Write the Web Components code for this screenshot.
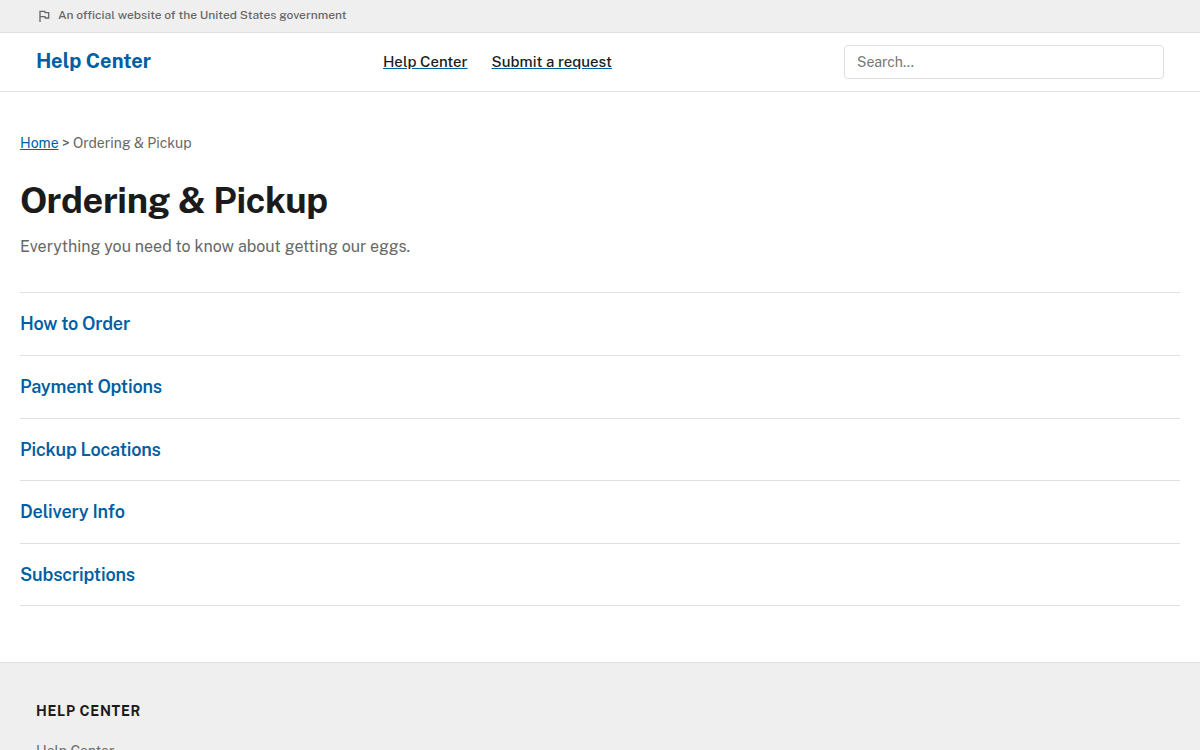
<!DOCTYPE html>
<html lang="en">
<head>
<meta charset="utf-8">
<title>Ordering &amp; Pickup</title>
<style>
    :root {
        --primary: #005ea2;
        --ink: #1b1b1b;
        --muted: #676767;
        --line: #dfdfdf;
        --surface: #efefef;
    }
    body {
        margin: 0;
        overflow: hidden;
        background: #fff;
        color: var(--ink);
        font-family: 'Public Sans', Roboto, 'Liberation Sans', sans-serif;
        font-size: 16px;
        -webkit-font-smoothing: antialiased;
    }
</style>
</head>
<body>
<help-page>
    <gov-banner slot="banner">An official website of the United States government</gov-banner>
    <help-header slot="header" brand="Help Center">
        <nav-link>Help Center</nav-link>
        <nav-link>Submit a request</nav-link>
    </help-header>
    <page-heading>
        <span slot="crumb">Ordering &amp; Pickup</span>
        <span slot="title">Ordering &amp; Pickup</span>
        <span slot="description">Everything you need to know about getting our eggs.</span>
    </page-heading>
    <article-list>
        <article-row>How to Order</article-row>
        <article-row>Payment Options</article-row>
        <article-row>Pickup Locations</article-row>
        <article-row>Delivery Info</article-row>
        <article-row>Subscriptions</article-row>
    </article-list>
    <help-footer slot="footer" heading="Help Center">Help Center</help-footer>
</help-page>

<script>
class HelpPage extends HTMLElement {
    constructor() {
        super();
        this.attachShadow({ mode: 'open' });
        this.shadowRoot.innerHTML = `
            <style>
                :host { display: flex; flex-direction: column; height: 100vh; overflow: hidden; }
                main { padding: 40px 20px 56px; flex: none; }
            </style>
            <slot name="banner"></slot>
            <slot name="header"></slot>
            <main><slot></slot></main>
            <slot name="footer"></slot>
        `;
    }
}

class GovBanner extends HTMLElement {
    constructor() {
        super();
        this.attachShadow({ mode: 'open' });
        this.shadowRoot.innerHTML = `
            <style>
                :host {
                    display: flex; align-items: center; gap: 6px; flex: none;
                    box-sizing: border-box; height: 33px; padding: 0 36px 2px;
                    background: var(--surface); border-bottom: 1px solid var(--line);
                    color: var(--muted); font-size: 12px; font-weight: 500; line-height: 18px;
                }
                svg { width: 16px; height: 16px; margin-top: 1px; }
            </style>
            <svg viewBox="0 0 24 24" fill="currentColor">
                <path d="M12.360 6l.4 2H18v6h-3.360l-.4-2H7V6h5.360M14 4H5v17h2v-7h5.600l.4 2h7V6h-5.600L14 4z"/>
            </svg>
            <span><slot></slot></span>
        `;
    }
}

class HelpHeader extends HTMLElement {
    constructor() {
        super();
        this.attachShadow({ mode: 'open' });
    }

    connectedCallback() {
        const brand = this.getAttribute('brand') || '';
        this.shadowRoot.innerHTML = `
            <style>
                :host {
                    display: grid; grid-template-columns: 347px 1fr 320px;
                    align-items: center; flex: none;
                    box-sizing: border-box; height: 59px; padding: 0 36px;
                    background: #fff; border-bottom: 1px solid var(--line);
                }
                .brand { color: var(--primary); font-size: 20px; font-weight: 700; line-height: 24px; padding-bottom: 2px; }
                nav { display: flex; gap: 24px; }
                input {
                    box-sizing: border-box; width: 100%; height: 34px; padding: 0 12px;
                    border: 1px solid var(--line); border-radius: 4px;
                    background: #fff; font: 14px 'Public Sans', Roboto, sans-serif;
                }
                input::placeholder { color: #757575; }
            </style>
            <div class="brand">${brand}</div>
            <nav><slot></slot></nav>
            <input type="search" placeholder="Search..." aria-label="Search">
        `;
    }
}

class NavLink extends HTMLElement {
    constructor() {
        super();
        this.attachShadow({ mode: 'open' });
        this.shadowRoot.innerHTML = `
            <style>
                :host { display: block; font-size: 15px; font-weight: 500; line-height: 20px; }
                a { text-decoration: underline; text-decoration-color: var(--primary); color: var(--ink); }
            </style>
            <a href="#"><slot></slot></a>
        `;
    }
}

class PageHeading extends HTMLElement {
    constructor() {
        super();
        this.attachShadow({ mode: 'open' });
        this.shadowRoot.innerHTML = `
            <style>
                :host { display: block; }
                .crumbs { color: var(--muted); font-size: 14px; line-height: 22px; }
                .crumbs a { color: var(--primary); }
                h1 { margin: 23px 0 0; font-size: 36px; font-weight: 700; line-height: 46px; letter-spacing: -0.01em; }
                p { margin: 11px 0 0; color: var(--muted); font-size: 16px; line-height: 26px; }
            </style>
            <div class="crumbs"><a href="#">Home</a> &gt; <slot name="crumb"></slot></div>
            <h1><slot name="title"></slot></h1>
            <p><slot name="description"></slot></p>
        `;
    }
}

class ArticleList extends HTMLElement {
    constructor() {
        super();
        this.attachShadow({ mode: 'open' });
        this.shadowRoot.innerHTML = `
            <style>
                :host { display: block; margin-top: 32.4px; border-top: 1px solid var(--line); }
            </style>
            <slot></slot>
        `;
    }
}

class ArticleRow extends HTMLElement {
    constructor() {
        super();
        this.attachShadow({ mode: 'open' });
        this.shadowRoot.innerHTML = `
            <style>
                :host { display: block; padding: 20px 0; border-bottom: 1px solid var(--line); }
                a {
                    display: block; color: var(--primary); text-decoration: none;
                    font-size: 18px; font-weight: 600; line-height: 1.2; letter-spacing: -0.01em;
                }
            </style>
            <a href="#"><slot></slot></a>
        `;
    }
}

class HelpFooter extends HTMLElement {
    constructor() {
        super();
        this.attachShadow({ mode: 'open' });
    }

    connectedCallback() {
        const heading = this.getAttribute('heading') || '';
        this.shadowRoot.innerHTML = `
            <style>
                :host {
                    display: block; flex: none; height: 300px; padding: 40px 36px;
                    background: var(--surface); border-top: 1px solid var(--line);
                }
                h2 { margin: 0 0 20px; font-size: 14px; font-weight: 700; line-height: 17px; letter-spacing: 0.05em; text-transform: uppercase; }
                a { color: var(--muted); font-size: 14px; line-height: 22px; text-decoration: none; }
            </style>
            <h2>${heading}</h2>
            <a href="#"><slot></slot></a>
        `;
    }
}

customElements.define('help-page', HelpPage);
customElements.define('gov-banner', GovBanner);
customElements.define('help-header', HelpHeader);
customElements.define('nav-link', NavLink);
customElements.define('page-heading', PageHeading);
customElements.define('article-list', ArticleList);
customElements.define('article-row', ArticleRow);
customElements.define('help-footer', HelpFooter);
</script>
</body>
</html>
